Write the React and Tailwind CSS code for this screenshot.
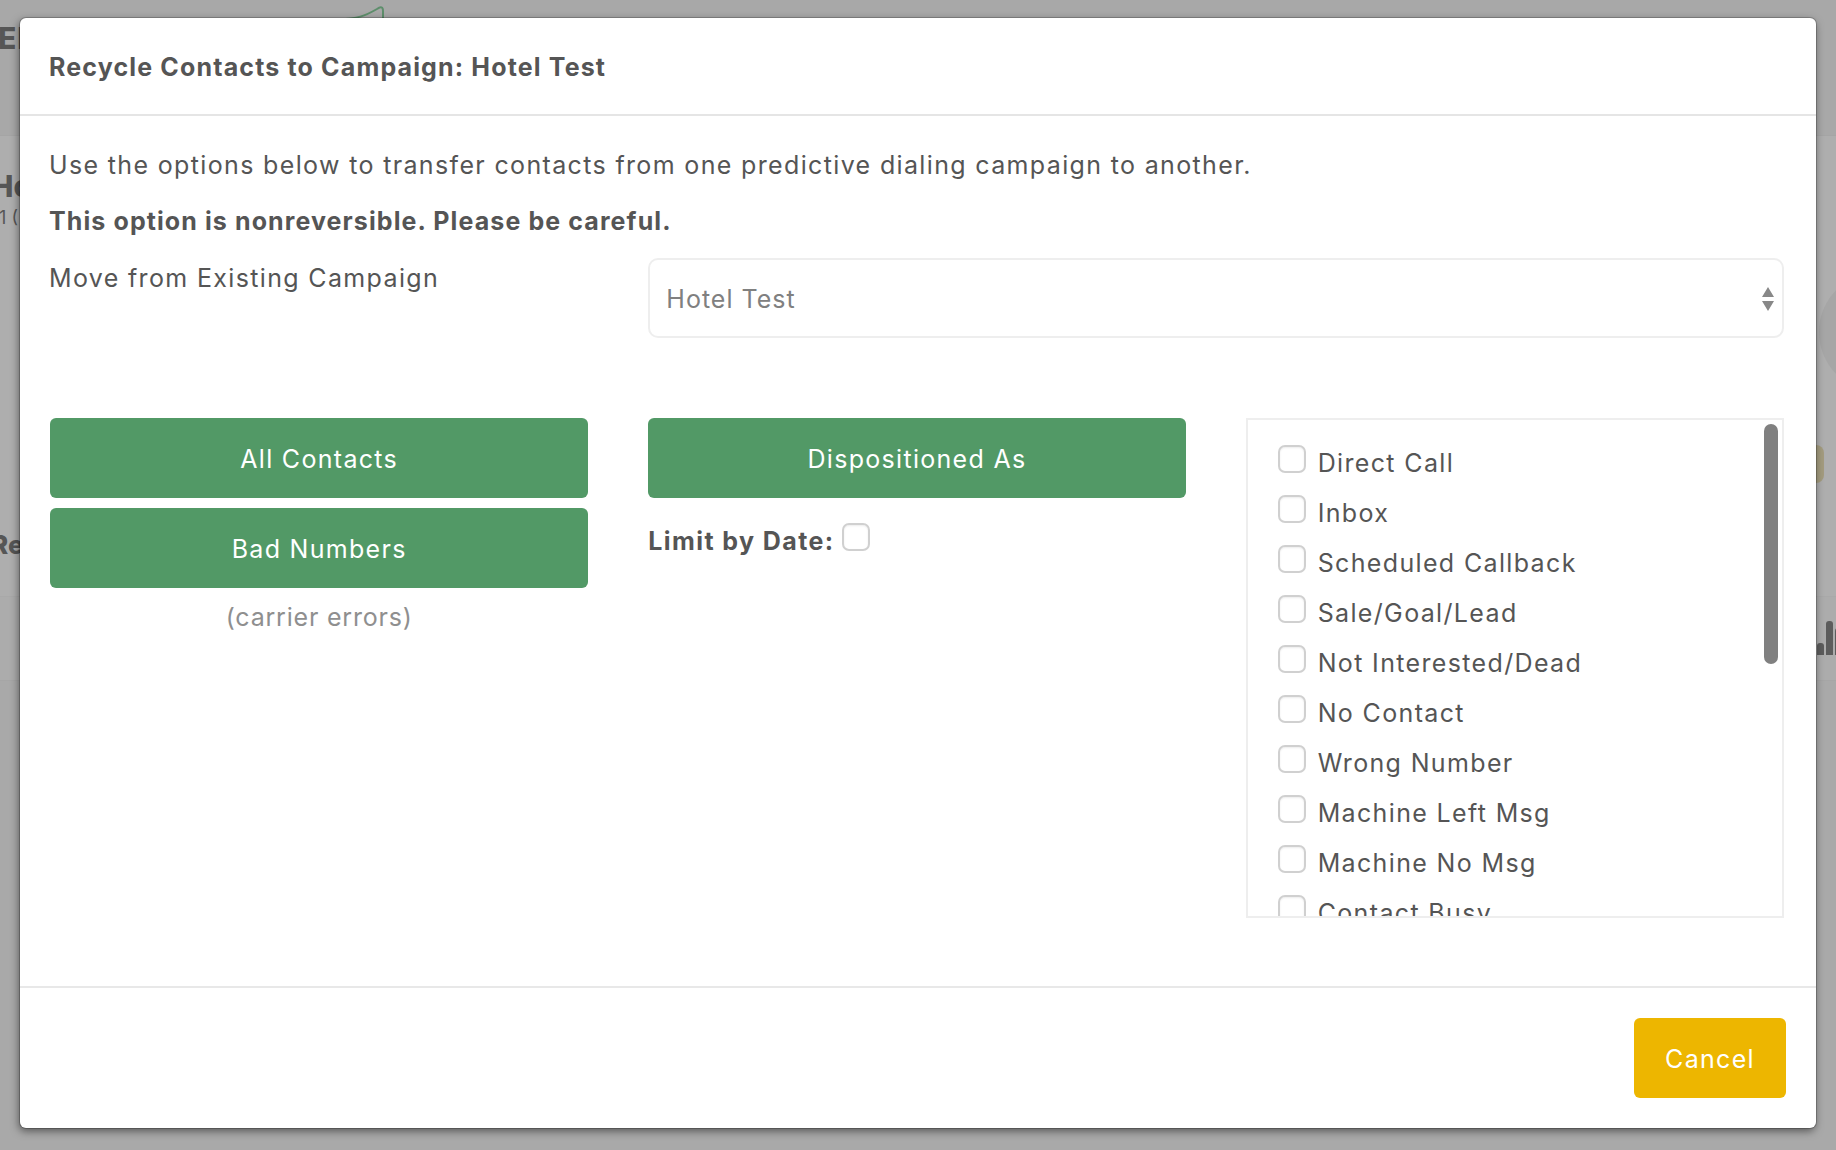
import React from "react";

const font = { fontFamily: '"Inter", "Liberation Sans", sans-serif' };
const items = [
  "Direct Call",
  "Inbox",
  "Scheduled Callback",
  "Sale/Goal/Lead",
  "Not Interested/Dead",
  "No Contact",
  "Wrong Number",
  "Machine Left Msg",
  "Machine No Msg",
  "Contact Busy",
];

function Box() {
  return (
    <input
      type="checkbox"
      className="appearance-none block shrink-0 w-[28px] h-[28px] rounded-[7px] border-2 border-[#d0d0d0] bg-white shadow-[inset_0_1px_2px_rgba(0,0,0,0.08)]"
    />
  );
}

function GreenButton({ children }) {
  return (
    <button className="w-full h-[80px] pt-[2px] rounded-[6px] bg-[#529966] text-white text-[25px] tracking-[1.3px]">
      {children}
    </button>
  );
}

function Backdrop() {
  return (
    <div className="absolute inset-0 flex flex-col bg-[#acacac] text-[#565656] overflow-hidden">
      <div className="h-[136px] bg-[#a8a8a8] border-b border-[#a5a5a5] pt-[20px]">
        <div className="text-[30px] font-extrabold leading-[36px] tracking-[1px] -ml-[2px]">EN</div>
      </div>
      <div className="h-[461px] bg-[#aeaeae] border-b border-[#a9a9a9] pt-[32px] relative">
        <div className="text-[30px] font-extrabold leading-[36px] -ml-[9px]">Ho</div>
        <div className="text-[18px] leading-[24px] -ml-[1px] mt-[2px]">1 (</div>
        <div className="absolute left-[-9px] top-[389px] text-[26px] font-extrabold leading-[40px]">Re</div>
      </div>
      <div className="h-[84px] bg-[#acacac] border-b border-[#a6a6a6]" />
      <div className="flex-1 bg-[#a9a9a9]" />
      <svg className="absolute left-[335px] top-[4px]" width="60" height="20" viewBox="0 0 60 20" fill="none">
        <path d="M5 15 C22 15 30 12 42 5 C46 2 48 3 48 7 V20" stroke="#5d8e6b" strokeWidth="2" />
      </svg>
      <div className="absolute left-[1819px] top-[272px] w-[120px] h-[120px] rounded-full bg-[#a6a6a6]" />
      <div className="absolute left-[1800px] top-[445px] w-[24px] h-[38px] rounded-[8px] bg-[#a49c7f]" />
      <div className="absolute left-[1817px] top-[643px] w-[7px] h-[12px] rounded-t-[3px] bg-[#5c5c5c]" />
      <div className="absolute left-[1826px] top-[621px] w-[7px] h-[34px] rounded-t-[3px] bg-[#5c5c5c]" />
      <div className="absolute left-[1835px] top-[628px] w-[7px] h-[27px] rounded-t-[3px] bg-[#5c5c5c]" />
    </div>
  );
}

export default function App() {
  return (
    <div style={font} className="relative w-full h-[1150px] overflow-hidden text-[#555555]">
      <Backdrop />
      <div className="absolute left-[20px] top-[18px] w-[1796px] h-[1110px] flex flex-col bg-white rounded-[6px] shadow-[0_0_0_1px_rgba(0,0,0,0.2),-1px_3px_8px_rgba(0,0,0,0.5)]">
        <div className="h-[98px] shrink-0 border-b-2 border-[#e5e5e5] pl-[29px] pt-[31px]">
          <h4 className="text-[25px] leading-[36px] font-bold tracking-[1.15px]">
            Recycle Contacts to Campaign: Hotel Test
          </h4>
        </div>
        <div className="flex-1 pl-[29px] pr-[32px] pt-[31px] text-[25px] leading-[36px] tracking-[1.35px]">
          <p className="mb-[20px]">
            Use the options below to transfer contacts from one predictive dialing campaign to another.
          </p>
          <p className="mb-[20px] font-bold tracking-[1.1px]">This option is nonreversible. Please be careful.</p>
          <div className="grid grid-cols-3 gap-x-[60px] -mt-[1px]">
            <label className="pt-[2px]">Move from Existing Campaign</label>
            <div className="col-span-2 ml-[1px] h-[80px] pt-[2px] rounded-[10px] border-2 border-[#eeeeee] flex items-center justify-between pl-[16px] pr-[7px] text-[#808080] tracking-[1px]">
              <span>Hotel Test</span>
              <svg width="14" height="24" viewBox="0 0 14 24" fill="#888888">
                <path d="M7 0 L13 10 H1 Z M1 14 H13 L7 24 Z" />
              </svg>
            </div>
          </div>
          <div className="grid grid-cols-3 gap-x-[60px] mt-[80px]">
            <div className="flex flex-col gap-[10px] ml-[1px] -mr-[1px]">
              <GreenButton>All Contacts</GreenButton>
              <GreenButton>Bad Numbers</GreenButton>
              <div className="text-center text-[#8f8f8f] mt-[1px] tracking-[0.8px]">(carrier errors)</div>
            </div>
            <div className="ml-[1px]">
              <GreenButton>Dispositioned As</GreenButton>
              <div className="flex items-start gap-[7px] mt-[25px] tracking-[1.4px]">
                <span className="font-bold">Limit by Date:</span>
                <Box />
              </div>
            </div>
            <div className="relative h-[500px] border-2 border-[#eeeeee] overflow-hidden pl-[30px] pt-[25px]">
              {items.map((t) => (
                <div key={t} className="flex items-start gap-[12px] h-[50px]">
                  <Box />
                  <span className="text-[#555555]">{t}</span>
                </div>
              ))}
              <div className="absolute right-[4px] top-[4px] w-[14px] h-[240px] rounded-[7px] bg-[#808080]" />
            </div>
          </div>
        </div>
        <div className="h-[142px] shrink-0 border-t-2 border-[#e8e8e8] flex items-start justify-end pt-[30px] pr-[30px]">
          <button className="w-[152px] h-[80px] pt-[4px] rounded-[6px] bg-[#edb600] text-white text-[25px] tracking-[1.3px]">
            Cancel
          </button>
        </div>
      </div>
    </div>
  );
}
